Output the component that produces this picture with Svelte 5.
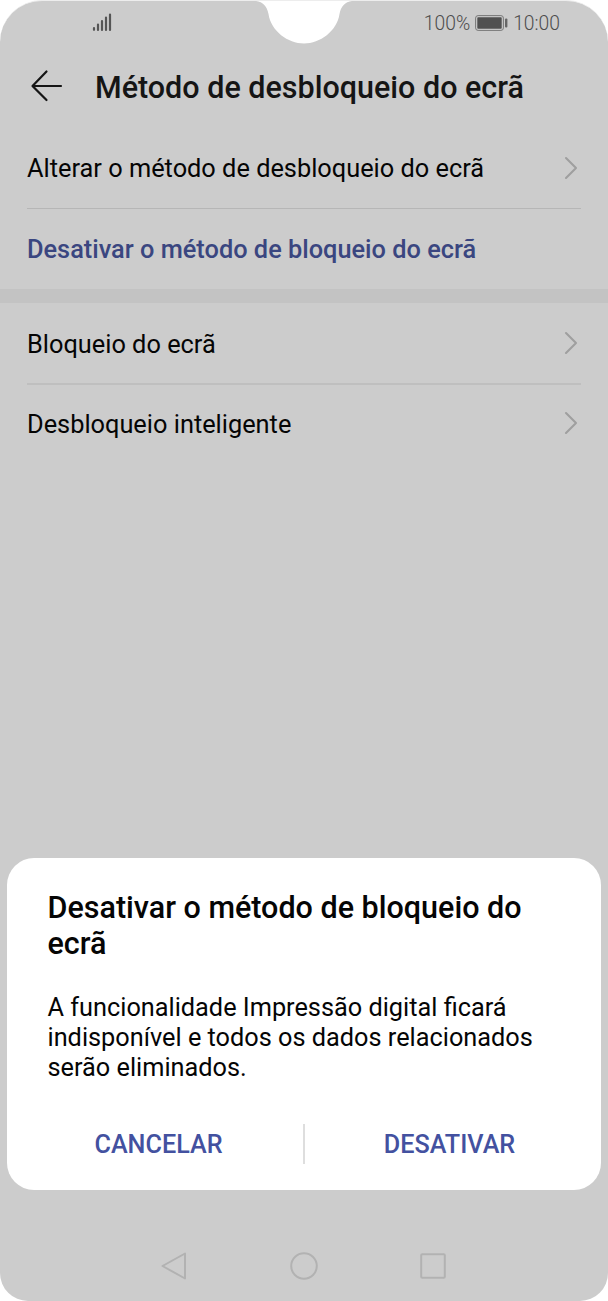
<script lang="ts">
	interface Item {
		label: string;
		accent?: boolean;
	}

	const groups: Item[][] = [
		[
			{label: 'Alterar o método de desbloqueio do ecrã'},
			{label: 'Desativar o método de bloqueio do ecrã', accent: true}
		],
		[{label: 'Bloqueio do ecrã'}, {label: 'Desbloqueio inteligente'}]
	];
</script>

<main>
	<svg class="notch" width="96" height="45" viewBox="0 0 96 45">
		<path
			d="M0 0H96V1C89 2 85 6 83.5 14C81 31 64 43.5 48 43.5S15 31 12.5 14C11 6 7 2 0 1Z"
			fill="#fff"
		/>
	</svg>

	<div class="status">
		<svg class="signal" width="20" height="19" viewBox="0 0 20 19">
			<path
				d="M2 15.2v1.6M6 11.5V17M10 8v9M14 4.5V17M18 1.5V17"
				stroke="#555"
				stroke-width="2.2"
				stroke-linecap="round"
			/>
		</svg>
		<div class="right">
			<span>100%</span>
			<svg width="33" height="16" viewBox="0 0 33 16">
				<rect x=".6" y=".6" width="27.8" height="14.8" rx="2.5" fill="none" stroke="#777" />
				<rect x="2.3" y="2.3" width="24.4" height="11.4" rx=".8" fill="#505050" />
				<rect x="30" y="3.5" width="2.4" height="9" rx="1" fill="#666" />
			</svg>
			<span>10:00</span>
		</div>
	</div>

	<header>
		<svg width="34" height="34" viewBox="0 0 34 34">
			<path
				d="M31 17H3M16.5 2.5L2.5 17L16.5 31"
				fill="none"
				stroke="#151515"
				stroke-width="2.2"
				stroke-linecap="round"
				stroke-linejoin="round"
			/>
		</svg>
		<h1>Método de desbloqueio do ecrã</h1>
	</header>

	{#each groups as items}
		<section>
			{#each items as { label, accent }}
				<div class="item" class:accent>
					<span>{label}</span>
					{#if !accent}
						<svg width="14" height="24" viewBox="0 0 14 24">
							<path
								d="M2 2L12 12L2 22"
								fill="none"
								stroke="#9f9f9f"
								stroke-width="2.1"
								stroke-linecap="round"
								stroke-linejoin="round"
							/>
						</svg>
					{/if}
				</div>
			{/each}
		</section>
	{/each}

	<div class="dialog" role="dialog">
		<h2>Desativar o método de bloqueio do ecrã</h2>
		<p>A funcionalidade Impressão digital ficará indisponível e todos os dados relacionados serão eliminados.</p>
		<div class="actions">
			<button class="cancel">CANCELAR</button>
			<span class="divider"></span>
			<button class="confirm">DESATIVAR</button>
		</div>
	</div>

	<nav>
		<svg width="28" height="30" viewBox="0 0 28 30">
			<path d="M25 2.5V27.5L2.5 15Z" />
		</svg>
		<svg width="30" height="30" viewBox="0 0 30 30">
			<circle cx="15" cy="15" r="12.8" />
		</svg>
		<svg width="28" height="30" viewBox="0 0 28 30">
			<rect x="1.2" y="3.2" width="23.6" height="23.6" rx="1" />
		</svg>
	</nav>
</main>

<style>
	:global(body) {
		margin: 0;
		background: #fff;
	}

	main {
		position: relative;
		box-sizing: border-box;
		display: flex;
		flex-direction: column;
		width: 608px;
		height: 1301px;
		border-top: 1px solid #ededed;
		border-radius: 42px 42px 28px 28px;
		background: #ccc;
		font-family: Roboto, sans-serif;
		overflow: hidden;
	}

	svg {
		display: block;
		flex: none;
	}

	.notch {
		position: absolute;
		top: -1px;
		left: 256px;
	}

	.status {
		display: flex;
		justify-content: space-between;
		align-items: center;
		height: 44px;
		padding: 0 48px 0 92px;
		color: #4c4c4c;
		font-weight: 300;
		font-size: 19.3px;
	}

	.signal {
		margin-bottom: 2px;
	}

	.right {
		display: flex;
		align-items: center;
		gap: 5px;
	}

	header {
		display: flex;
		align-items: center;
		gap: 31px;
		height: 83px;
		padding-left: 30px;
	}

	header svg {
		margin-top: -1px;
	}

	h1,
	h2 {
		margin: 0;
		font-weight: 500;
		font-size: 30.5px;
	}

	h1 {
		padding-top: 2px;
		color: #151515;
	}

	.item {
		box-sizing: border-box;
		display: flex;
		justify-content: space-between;
		align-items: center;
		height: 81px;
		margin: 0 27px;
		padding-right: 3px;
		color: #050505;
		font-size: 25.35px;
	}

	.item:first-child {
		border-bottom: 1px solid #b6b6b6;
	}

	.item:last-child {
		height: 80px;
	}

	.item svg {
		margin-bottom: 1px;
	}

	section + section {
		border-top: 14px solid #c3c3c3;
	}

	section + section .item:first-child {
		height: 82px;
		border-bottom: 2px solid #bfbfbf;
	}

	section + section .item:first-child span {
		padding-top: 2px;
	}

	section + section .item:last-child {
		height: 77px;
	}

	.item.accent {
		color: #3a4680;
		font-weight: 500;
	}

	.dialog {
		box-sizing: border-box;
		width: 594px;
		height: 332px;
		margin: auto 7px 0;
		padding: 32px 40px 0 40.5px;
		border-radius: 27px;
		background: #fff;
		color: #050505;
	}

	h2 {
		line-height: 36px;
	}

	p {
		margin: 31px 0 0;
		font-size: 25.3px;
		line-height: 30px;
	}

	.actions {
		display: grid;
		grid-template-columns: 1fr 2px 1fr;
		align-items: center;
		height: 40px;
		margin: 41px -40px 0 -40.5px;
	}

	.divider {
		height: 40px;
		background: #dedede;
	}

	button {
		padding: 0;
		border: 0;
		background: none;
		color: #4351a0;
		font: 500 25.2px Roboto, sans-serif;
	}

	.cancel {
		padding-left: 7px;
	}

	.confirm {
		padding-right: 7px;
	}

	nav {
		display: flex;
		justify-content: center;
		align-items: center;
		gap: 101px;
		height: 70px;
		margin-top: 41px;
	}

	nav svg {
		fill: none;
		stroke: #b2b2b2;
		stroke-width: 2;
		stroke-linejoin: round;
	}
</style>
